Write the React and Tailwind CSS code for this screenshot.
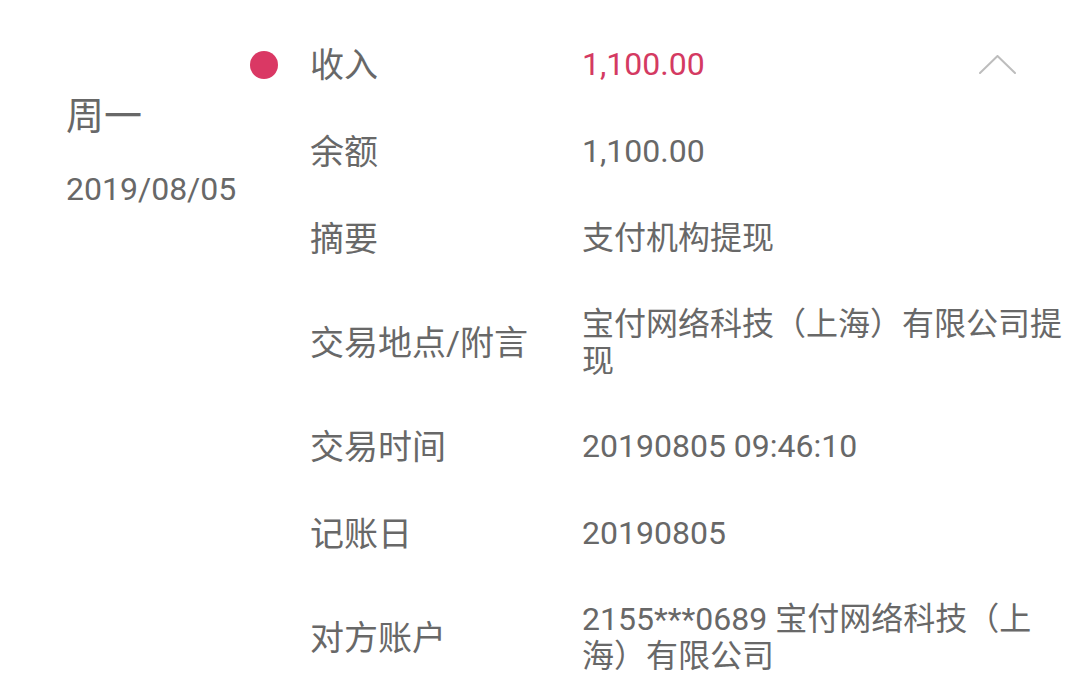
import React from "react";

const font = { fontFamily: "Roboto, 'Noto Sans CJK SC', 'Noto Sans', sans-serif" };

function Chevron() {
  return (
    <svg width="37" height="19" viewBox="0 0 37 19" fill="none">
      <polyline points="1,18 18.5,1 36,18" stroke="#bdbdbd" strokeWidth="2" strokeLinecap="round" strokeLinejoin="round" />
    </svg>
  );
}

const rows = [
  { label: "收入", value: ["1,100.00"], red: true, first: true },
  { label: "余额", value: ["1,100.00"] },
  { label: "摘要", value: ["支付机构提现"] },
  { label: "交易地点/附言", value: ["宝付网络科技（上海）有限公司提", "现"] },
  { label: "交易时间", value: ["20190805 09:46:10"] },
  { label: "记账日", value: ["20190805"] },
  { label: "对方账户", value: ["2155***0689 宝付网络科技（上", "海）有限公司"] },
];

export default function App() {
  return (
    <div className="w-[1078px] h-[689px] overflow-hidden bg-white text-[#686868] flex" style={font}>
      <div className="w-[250px] shrink-0 pl-[66px] pt-[92px] flex flex-col">
        <div className="text-[38px] leading-[48px] whitespace-nowrap">周一</div>
        <div className="text-[32px] leading-[40px] mt-[29px] whitespace-nowrap">2019/08/05</div>
      </div>
      <div className="flex-1 min-w-0 pt-[21px] flex flex-col">
        {rows.map((r, i) => (
          <div key={i} className="flex items-center py-[23.5px]">
            <div className="w-[60px] shrink-0 flex items-center">
              {r.first && <div className="w-[28px] h-[28px] rounded-full bg-[#da3864]" />}
            </div>
            <div className="w-[272px] shrink-0 text-[34px] leading-[40px] whitespace-nowrap">{r.label}</div>
            <div className="flex-1 min-w-0 flex items-center justify-between">
              <div className={`text-[32px] leading-[37px] whitespace-nowrap ${r.red ? "text-[#d43a62]" : ""}`}>
                {r.value.map((l, j) => (
                  <div key={j}>{l}</div>
                ))}
              </div>
              {r.first && (
                <div className="mr-[62px]">
                  <Chevron />
                </div>
              )}
            </div>
          </div>
        ))}
      </div>
    </div>
  );
}
